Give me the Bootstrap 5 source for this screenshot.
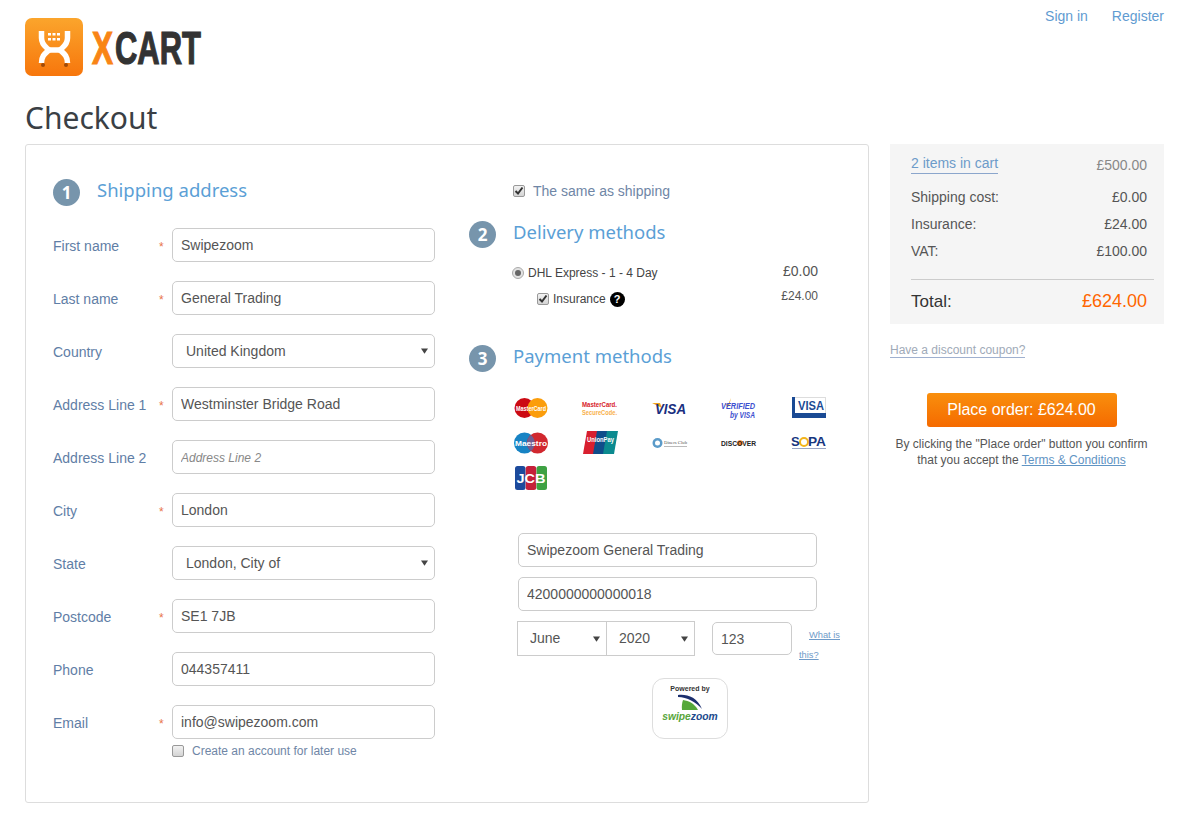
<!DOCTYPE html>
<html lang="en">
<head>
  <meta charset="UTF-8">
  <meta name="viewport" content="width=device-width, initial-scale=1.0">
  <title>Checkout - X-Cart</title>
  <link href="https://cdn.jsdelivr.net/npm/bootstrap@5.3.3/dist/css/bootstrap.min.css" rel="stylesheet">
  <style>
    body { font-family: "Liberation Sans", Arial, sans-serif; font-size: 14px; color: #555; background: #fff; }
    a { color: #5f9bd1; text-decoration: none; }
    .page-wrap { padding: 0 38px 0 25px; height: 817px; overflow: hidden; }
    .top-bar { height: 76px; }
    .brand-logo { display: block; margin-top: 18px; overflow: visible; }
    .top-links { padding-top: 6px; }
    .page-title { font-family: "Noto Sans", sans-serif; font-size: 30px; line-height: 40px; color: #3a3f45; margin: 22px 0 6px; font-weight: 400; }

    .checkout-box { width: 844px; height: 659px; border: 1px solid #ddd; border-radius: 3px; }
    .col-address { width: 443px; padding: 34px 0 0 27px; }
    .col-methods { width: 399px; padding-top: 34px; }
    .step-head { display: flex; align-items: center; height: 27px; }
    .step-head-first { margin-bottom: 22px; }
    .step-head-delivery { margin-top: 20px; }
    .step-head-payment { margin-top: 37px; }
    .step-num { width: 27px; height: 27px; border-radius: 50%; background: #7795ac; color: #fff; font-family: "Noto Sans", sans-serif; font-weight: 700; font-size: 17px; line-height: 27px; text-align: center; flex: none; margin-right: 17px; }
    .step-title { font-family: "Noto Sans", sans-serif; font-size: 18.500px; color: #5b9fd6; margin: 0; font-weight: 400; position: relative; top: -2px; }

    .field-row { display: flex; align-items: center; height: 34px; margin-bottom: 19px; }
    .field-label { width: 106px; color: #5f7ea6; padding-top: 2px; }
    .req-mark { width: 13px; color: #e8734a; font-size: 12px; padding-top: 3px; }
    .field-input { width: 263px; height: 34px; padding: 0 8px; font-size: 14px; color: #555; border: 1px solid #ccc; border-radius: 5px; box-shadow: none; }
    .field-input::placeholder { color: #888; font-style: italic; font-size: 12px; }
    .field-select { padding: 0 13px; background-position: right 6px center; background-size: 7px 6px; background-image: url("data:image/svg+xml,%3csvg xmlns='http://www.w3.org/2000/svg' viewBox='0 0 8 6'%3e%3cpath fill='%23444' d='M0 0h8L4 6z'/%3e%3c/svg%3e"); }

    .grey-check { appearance: none; width: 12px; height: 12px; margin: 0; flex: none; border: 1px solid #999; border-radius: 2px; background: linear-gradient(#f2f2f2, #d4d4d4); }
    .grey-check:checked { background: url("data:image/svg+xml,%3csvg xmlns='http://www.w3.org/2000/svg' viewBox='0 0 12 12'%3e%3cpath fill='none' stroke='%23333' stroke-width='2' d='M2.500 6l2.500 2.500 4.500-6'/%3e%3c/svg%3e") center/12px 12px no-repeat, linear-gradient(#f2f2f2, #d4d4d4); }
    .grey-radio { width: 12px; height: 12px; flex: none; border-radius: 50%; border: 1px solid #aaa; background: #e2e2e2; display: flex; align-items: center; justify-content: center; }
    .grey-radio::after { content: ""; width: 6px; height: 6px; border-radius: 50%; background: #666; }

    .later-row { margin: -14px 0 0 106px; padding-left: 13px; font-size: 12px; color: #6f86a6; gap: 8px; line-height: 14px; }
    .same-row { height: 20px; color: #6f86a6; gap: 8px; margin: 2px 0 0 44px; line-height: 20px; }
    .delivery-list { margin: 14px 50px 0 43px; font-size: 12px; color: #444; }
    .dhl-price { color: #555; font-size: 14px; position: relative; top: -1px; }
    .ins-price { color: #555; position: relative; top: -3px; }
    .ins-row { margin-top: 7px; padding-left: 25px; }
    .help-mark { width: 15px; height: 15px; border-radius: 50%; background: #000; color: #fff; font-size: 11px; font-weight: 700; line-height: 15px; text-align: center; display: inline-block; }

    .card-logos { display: grid; grid-template-columns: repeat(5, 69.5px); grid-auto-rows: 35px; margin: 18px 0 0 27px; justify-items: center; align-items: center; }
    .card-logos svg { display: block; overflow: visible; }
    .pay-form { margin: 38px 0 0 49px; }
    .pay-input { width: 299px; margin-bottom: 10px; }
    .exp-select { height: 35px; border-radius: 0; font-size: 14px; color: #555; border: 1px solid #ccc; padding: 0 12px; background-position: right 6px center; background-size: 7px 6px; background-image: url("data:image/svg+xml,%3csvg xmlns='http://www.w3.org/2000/svg' viewBox='0 0 8 6'%3e%3cpath fill='%23444' d='M0 0h8L4 6z'/%3e%3c/svg%3e"); }
    .month-select { width: 90px; margin-left: -1px; }
    .year-select { width: 89px; margin-left: -1px; }
    .cvv-input { width: 80px; height: 33px; margin: 1px 0 0 17px; }
    .what-link { width: 46px; margin-left: 7px; font-size: 9.300px; line-height: 20px; text-indent: 10px; padding-top: 4px; }
    .what-link a { text-decoration: underline; color: #6f9bc9; }
    .powered-box { width: 76px; height: 61px; margin: 13px 0 0 134px; border: 1px solid #ddd; border-radius: 12px; text-align: center; padding-top: 5px; }
    .powered-txt { font-size: 7px; font-weight: 700; line-height: 10px; color: #333; }
    .sz-word { font-size: 10.300px; font-weight: 700; font-style: italic; line-height: 11px; white-space: nowrap; }
    .sz-green { color: #59a63c; }
    .sz-blue { color: #214a8c; }

    .side-col { width: 274px; margin-left: 21px; }
    .totals-box { background: #f5f5f5; height: 180px; padding: 12px 17px 0 21px; }
    .total-line { display: flex; justify-content: space-between; height: 27px; line-height: 27px; color: #555; }
    .cart-line { color: #888; margin-bottom: 10px; height: 18px; line-height: 18px; }
    .dashed-link { border-bottom: 1px solid #8ba6cc; color: #6d9bc9; line-height: 15px; display: inline-block; }
    .totals-rule { margin: 14px -7px 8px 0; border: 0; border-top: 1px solid #ccc; opacity: 1; }
    .grand-line { display: flex; justify-content: space-between; align-items: center; color: #333; font-size: 17px; }
    .grand-price { color: #ff6600; font-size: 18px; }
    .coupon-link { font-size: 12px; color: #a0aab8; border-bottom: 1px solid #9fb0cf; line-height: 14px; display: inline-block; margin-top: 19px; }
    .order-wrap { padding-right: 11px; text-align: center; font-size: 12px; line-height: 16px; color: #555; margin-top: 33px; }
    .order-btn { width: 190px; height: 34px; margin-bottom: 9px; padding: 0; font-size: 16px; color: #fff; border: 0; border-radius: 3px; background: linear-gradient(#f98f0d, #f56a00); }
    .order-wrap a { text-decoration: underline; color: #5f94c4; }
  </style>
</head>
<body>
  <div class="page-wrap">

    <!-- Header -->
    <div class="top-bar d-flex justify-content-between align-items-start">
      <svg class="brand-logo" width="178" height="58" viewBox="0 0 178 58">
        <defs>
          <linearGradient id="logoFill" x1="0" y1="0" x2="0" y2="1">
            <stop offset="0" stop-color="#fba52c"/>
            <stop offset="1" stop-color="#f7760c"/>
          </linearGradient>
        </defs>
        <rect width="58" height="58" rx="7" fill="url(#logoFill)"/>
        <g fill="none" stroke="#fff" stroke-width="5.500">
          <path d="M16.500 13V20C16.500 27 21 29 24 32C21 35 16.500 37 16.500 45"/>
          <path d="M42.500 13V20C42.500 27 38 29 35 32C38 35 42.500 37 42.500 45"/>
          <path d="M22 32H37"/>
        </g>
        <g fill="#fff">
          <rect x="23" y="15" width="3" height="2.500"/><rect x="27.500" y="15" width="3" height="2.500"/><rect x="32" y="15" width="3" height="2.500"/>
          <rect x="23" y="20" width="3" height="2.500"/><rect x="27.500" y="20" width="3" height="2.500"/><rect x="32" y="20" width="3" height="2.500"/>
        </g>
        <circle cx="18" cy="47" r="2" fill="#a04a08"/><circle cx="41" cy="47" r="2" fill="#a04a08"/>
        <text x="67" y="46" font-family="Liberation Sans, sans-serif" font-weight="700" font-size="46" textLength="21" lengthAdjust="spacingAndGlyphs" fill="#f98515" stroke="#f98515" stroke-width="1.200">X</text>
        <text x="90" y="46" font-family="Liberation Sans, sans-serif" font-weight="700" font-size="46" textLength="86" lengthAdjust="spacingAndGlyphs" fill="#333" stroke="#333" stroke-width="1.200">CART</text>
      </svg>
      <div class="top-links d-flex gap-4">
        <a href="#">Sign in</a>
        <a href="#">Register</a>
      </div>
    </div>

    <h1 class="page-title">Checkout</h1>

    <div class="d-flex align-items-start">
      <div class="checkout-box card flex-row">

        <!-- Shipping address -->
        <div class="col-address">
          <div class="step-head step-head-first">
            <span class="step-num">1</span>
            <h2 class="step-title">Shipping address</h2>
          </div>
          <div class="field-row"><span class="field-label">First name</span><span class="req-mark">*</span><input class="form-control field-input" value="Swipezoom"></div>
          <div class="field-row"><span class="field-label">Last name</span><span class="req-mark">*</span><input class="form-control field-input" value="General Trading"></div>
          <div class="field-row"><span class="field-label">Country</span><span class="req-mark"></span><select class="form-select field-input field-select"><option>United Kingdom</option></select></div>
          <div class="field-row"><span class="field-label">Address Line 1</span><span class="req-mark">*</span><input class="form-control field-input" value="Westminster Bridge Road"></div>
          <div class="field-row"><span class="field-label">Address Line 2</span><span class="req-mark"></span><input class="form-control field-input" placeholder="Address Line 2"></div>
          <div class="field-row"><span class="field-label">City</span><span class="req-mark">*</span><input class="form-control field-input" value="London"></div>
          <div class="field-row"><span class="field-label">State</span><span class="req-mark"></span><select class="form-select field-input field-select"><option>London, City of</option></select></div>
          <div class="field-row"><span class="field-label">Postcode</span><span class="req-mark">*</span><input class="form-control field-input" value="SE1 7JB"></div>
          <div class="field-row"><span class="field-label">Phone</span><span class="req-mark"></span><input class="form-control field-input" value="044357411"></div>
          <div class="field-row"><span class="field-label">Email</span><span class="req-mark">*</span><input class="form-control field-input" value="info@swipezoom.com"></div>
          <div class="later-row d-flex align-items-center"><input type="checkbox" class="grey-check"><span>Create an account for later use</span></div>
        </div>

        <!-- Delivery and payment -->
        <div class="col-methods">
          <div class="same-row d-flex align-items-center"><input type="checkbox" class="grey-check" checked><span>The same as shipping</span></div>

          <div class="step-head step-head-delivery">
            <span class="step-num">2</span>
            <h2 class="step-title">Delivery methods</h2>
          </div>
          <div class="delivery-list">
            <div class="d-flex justify-content-between align-items-center">
              <div class="d-flex align-items-center gap-1"><span class="grey-radio"></span><span>DHL Express - 1 - 4 Day</span></div>
              <span class="dhl-price">£0.00</span>
            </div>
            <div class="ins-row d-flex justify-content-between align-items-center">
              <div class="d-flex align-items-center gap-1"><input type="checkbox" class="grey-check" checked><span>Insurance</span><span class="help-mark">?</span></div>
              <span class="ins-price">£24.00</span>
            </div>
          </div>

          <div class="step-head step-head-payment">
            <span class="step-num">3</span>
            <h2 class="step-title">Payment methods</h2>
          </div>

          <div class="card-logos">
            <!-- mastercard -->
            <svg width="36" height="22" viewBox="0 0 36 22"><circle cx="11.500" cy="11" r="10" fill="#cc0a13"/><circle cx="24.500" cy="11" r="10" fill="#fb9d0b"/><text x="18" y="13.500" text-anchor="middle" font-size="6.500" font-family="Liberation Sans" fill="#fff" font-weight="700" textLength="30" lengthAdjust="spacingAndGlyphs">MasterCard</text></svg>
            <svg width="36" height="16" viewBox="0 0 36 16"><text x="0" y="7" font-size="6.500" font-family="Liberation Sans" font-weight="700" fill="#d8232a" textLength="35" lengthAdjust="spacingAndGlyphs">MasterCard.</text><text x="0" y="14.500" font-size="6.500" font-family="Liberation Sans" font-weight="700" fill="#f8b04a" textLength="35" lengthAdjust="spacingAndGlyphs">SecureCode.</text></svg>
            <svg width="36" height="14" viewBox="0 0 36 14"><path d="M0 2h8l2 5z" fill="#f2a51c"/><text x="3" y="13" font-size="15" font-style="italic" font-family="Liberation Sans" font-weight="700" fill="#1a2f80" textLength="31" lengthAdjust="spacingAndGlyphs">VISA</text></svg>
            <svg width="36" height="22" viewBox="0 0 36 22"><path d="M4 6l3 2 3-7-2 8-2 1z" fill="#f2a51c"/><text x="0" y="12" font-size="9" font-style="italic" font-family="Liberation Sans" font-weight="700" fill="#3d50d0" textLength="34" lengthAdjust="spacingAndGlyphs">VERIFIED</text><text x="9" y="21" font-size="8.500" font-style="italic" font-family="Liberation Sans" font-weight="700" fill="#3d50d0" textLength="25" lengthAdjust="spacingAndGlyphs">by VISA</text></svg>
            <svg width="34" height="21" viewBox="0 0 34 21"><rect x=".5" y=".5" width="33" height="20" fill="#fff" stroke="#ddd"/><path d="M0 0h3v16h31v5H0z" fill="#1a4a94"/><text x="6" y="13" font-size="12" font-family="Liberation Sans" font-weight="700" fill="#1a4a94" textLength="26" lengthAdjust="spacingAndGlyphs">VISA</text></svg>

            <svg width="36" height="22" viewBox="0 0 36 22"><circle cx="11.500" cy="11" r="10.500" fill="#1783c4"/><circle cx="24.500" cy="11" r="10.500" fill="#d1282f"/><path d="M18 3a10.500 10.500 0 0 1 0 16 10.500 10.500 0 0 1 0-16z" fill="#6f5e92"/><text x="18" y="13.500" text-anchor="middle" font-size="8" font-family="Liberation Sans" fill="#fff" font-weight="700" textLength="32" lengthAdjust="spacingAndGlyphs">Maestro</text></svg>
            <svg width="36" height="23" viewBox="0 0 36 23"><path d="M5 0h14l-4 23H1z" fill="#d81f2f"/><path d="M15 0h12l-4 23H11z" fill="#0f4d8a"/><path d="M25 0h11l-4 23H21z" fill="#0b8a8f"/><text x="5" y="11" font-size="6.500" font-family="Liberation Sans" font-weight="700" fill="#fff" textLength="27" lengthAdjust="spacingAndGlyphs">UnionPay</text></svg>
            <svg width="36" height="12" viewBox="0 0 36 12"><circle cx="5.500" cy="6" r="5" fill="#5b9bc9"/><circle cx="5.500" cy="6" r="2.500" fill="#fff"/><text x="12" y="7" font-size="5" font-family="Liberation Serif" fill="#555" textLength="23" lengthAdjust="spacingAndGlyphs">Diners Club</text><rect x="12" y="9" width="23" height="1" fill="#bbb"/></svg>
            <svg width="36" height="10" viewBox="0 0 36 10"><circle cx="19" cy="5" r="2.800" fill="#f47a20"/><text x="0" y="8" font-size="7.500" font-family="Liberation Sans" font-weight="700" fill="#222" textLength="35" lengthAdjust="spacingAndGlyphs">DISCOVER</text></svg>
            <svg width="36" height="16" viewBox="0 0 36 16"><circle cx="13" cy="7" r="4" fill="none" stroke="#f3b41b" stroke-width="2"/><text x="0" y="11" font-size="13" font-family="Liberation Sans" font-weight="700" fill="#17367f">S</text><text x="17" y="11" font-size="13" font-family="Liberation Sans" font-weight="700" fill="#17367f" textLength="18" lengthAdjust="spacingAndGlyphs">PA</text><rect x="1" y="13" width="34" height="1" fill="#9aa5c4"/></svg>

            <svg width="32" height="24" viewBox="0 0 32 24"><rect width="10.500" height="24" rx="2.500" fill="#1c4a9c"/><rect x="10.750" width="10.500" height="24" rx="2.500" fill="#c4203a"/><rect x="21.500" width="10.500" height="24" rx="2.500" fill="#3ea143"/><text x="16" y="17" text-anchor="middle" font-size="12" font-family="Liberation Sans" font-weight="700" fill="#fff" textLength="29" lengthAdjust="spacingAndGlyphs">JCB</text></svg>
          </div>

          <div class="pay-form">
            <input class="form-control field-input pay-input" value="Swipezoom General Trading">
            <input class="form-control field-input pay-input" value="4200000000000018">
            <div class="d-flex align-items-start">
              <select class="form-select exp-select month-select"><option>June</option></select>
              <select class="form-select exp-select year-select"><option>2020</option></select>
              <input class="form-control field-input cvv-input" value="123">
              <div class="what-link"><a href="#">What is this?</a></div>
            </div>
            <div class="powered-box">
              <div class="powered-txt">Powered by</div>
              <svg width="30" height="17" viewBox="0 0 30 17" class="d-block mx-auto"><path d="M3 1C12 0 22 3 27 15 21 8 12 3 3 3z" fill="#1c2f6e"/><path d="M8 6C14 7 19 9 23 16H7C6.500 12 7 9 8 6z" fill="#55a83a"/></svg>
              <div class="sz-word"><span class="sz-green">swipe</span><span class="sz-blue">zoom</span></div>
            </div>
          </div>
        </div>
      </div>

      <!-- Totals -->
      <div class="side-col">
        <div class="totals-box">
          <div class="total-line cart-line"><a href="#" class="dashed-link">2 items in cart</a><span>£500.00</span></div>
          <div class="total-line"><span>Shipping cost:</span><span>£0.00</span></div>
          <div class="total-line"><span>Insurance:</span><span>£24.00</span></div>
          <div class="total-line"><span>VAT:</span><span>£100.00</span></div>
          <hr class="totals-rule">
          <div class="grand-line"><span>Total:</span><span class="grand-price">£624.00</span></div>
        </div>
        <a href="#" class="coupon-link">Have a discount coupon?</a>
        <div class="order-wrap">
          <button type="button" class="btn order-btn">Place order: £624.00</button>
          <div>By clicking the "Place order" button you confirm<br>that you accept the <a href="#">Terms &amp; Conditions</a></div>
        </div>
      </div>
    </div>
  </div>

  <script src="https://cdn.jsdelivr.net/npm/bootstrap@5.3.3/dist/js/bootstrap.bundle.min.js"></script>
</body>
</html>
